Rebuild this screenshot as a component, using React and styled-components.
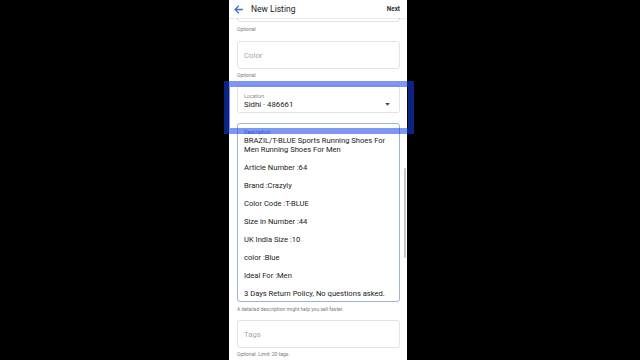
import React from 'react';
import styled, { createGlobalStyle } from 'styled-components';

const GlobalStyle = createGlobalStyle`
  html, body {
    margin: 0;
    padding: 0;
    background: #000;
    width: 640px;
    height: 360px;
    overflow: hidden;
    font-family: Roboto, "Liberation Sans", sans-serif;
  }
`;

// 스크롤된 상태를 흉내내기 위한 오프셋
const SCROLL_OFFSET = 24;

const descriptionLines = [
  ['BRAZIL/T-BLUE Sports Running Shoes For', 'Men Running Shoes For Men'],
  ['Article Number :64'],
  ['Brand :Crazyly'],
  ['Color Code :T-BLUE'],
  ['Size in Number :44'],
  ['UK India Size :10'],
  ['color :Blue'],
  ['Ideal For :Men'],
  ['3 Days Return Policy, No questions asked.'],
];

const BackArrow = () => (
  <svg width="9" height="9" viewBox="0 0 12 12" fill="none">
    <path d="M11 6H1.8M6 1.5L1.5 6L6 10.5" stroke="#2f6fe0" strokeWidth="1.7" strokeLinecap="square" />
  </svg>
);

const Caret = () => (
  <svg width="5" height="3" viewBox="0 0 6 4">
    <path d="M0 0H6L3 3.6Z" fill="#444" />
  </svg>
);

export default function App() {
  return (
    <Page>
      <GlobalStyle />
      <Phone>
        <Header>
          <BackButton><BackArrow /></BackButton>
          <Title>New Listing</Title>
          <NextButton>Next</NextButton>
        </Header>
        <Content>
          <Scroller offset={SCROLL_OFFSET}>
            <Field />
            <Hint gap={4}>Optional</Hint>

            <Field gap={8}>
              <Placeholder>Color</Placeholder>
            </Field>
            <Hint gap={3}>Optional</Hint>

            <Field gap={6} stacked>
              <FieldLabel>Location</FieldLabel>
              <ValueRow>
                <Value>Sidhi · 486661</Value>
                <Caret />
              </ValueRow>
            </Field>

            <DescriptionBox>
              <FieldLabel focused>Description</FieldLabel>
              <DescriptionText>
                {descriptionLines.map((lines, i) => (
                  <Paragraph key={i}>
                    {lines.map((line, j) => (
                      <React.Fragment key={j}>
                        {j > 0 && <br />}
                        {line}
                      </React.Fragment>
                    ))}
                  </Paragraph>
                ))}
              </DescriptionText>
            </DescriptionBox>
            <Hint gap={4}>A detailed description might help you sell faster.</Hint>

            <Field gap={7}>
              <Placeholder>Tags</Placeholder>
            </Field>
            <Hint gap={3}>Optional. Limit: 20 tags.</Hint>
          </Scroller>
          <ScrollThumb />
        </Content>
      </Phone>
      <Highlight />
    </Page>
  );
}

const Page = styled.div`
  position: relative;
  width: 640px;
  height: 360px;
  display: flex;
  padding-left: 229px;
  box-sizing: border-box;
`;

const Phone = styled.div`
  width: 178px;
  height: 360px;
  background: #fff;
  display: flex;
  flex-direction: column;
`;

const Header = styled.div`
  height: 18px;
  flex: 0 0 18px;
  display: flex;
  align-items: center;
  padding: 0 7px 0 4px;
  background: #fff;
  box-shadow: 0 1px 1px rgba(0, 0, 0, 0.08);
  position: relative;
  z-index: 2;
`;

const BackButton = styled.div`
  width: 10px;
  height: 10px;
  display: flex;
  align-items: center;
  justify-content: center;
`;

const Title = styled.div`
  margin-left: 8px;
  font-size: 8.5px;
  color: #222;
  flex: 1;
`;

const NextButton = styled.div`
  font-size: 6.3px;
  font-weight: 700;
  color: #333;
`;

const Content = styled.div`
  flex: 1;
  position: relative;
  overflow: hidden;
`;

const Scroller = styled.div`
  margin-top: ${(props) => -props.offset}px;
  padding: 0 7px 0 8px;
  display: flex;
  flex-direction: column;
`;

const Field = styled.div`
  height: 28px;
  box-sizing: border-box;
  margin-top: ${(props) => props.gap || 0}px;
  border: 1px solid #e2e2e2;
  border-radius: 3px;
  padding: ${(props) => (props.stacked ? '7px 9px 0 6px' : '0 9px 0 6px')};
  display: flex;
  flex-direction: ${(props) => (props.stacked ? 'column' : 'row')};
  justify-content: flex-start;
  align-items: ${(props) => (props.stacked ? 'stretch' : 'center')};
`;

const Placeholder = styled.span`
  font-size: 7.8px;
  color: #a8a8a8;
`;

const FieldLabel = styled.div`
  font-size: 5.2px;
  line-height: 6px;
  color: ${(props) => (props.focused ? '#3b6fd6' : '#8a8a8a')};
`;

const ValueRow = styled.div`
  display: flex;
  align-items: center;
  justify-content: space-between;
  margin-top: 1px;
`;

const Value = styled.span`
  font-size: 7.8px;
  line-height: 9px;
  color: #222;
`;

const DescriptionBox = styled.div`
  height: 179px;
  box-sizing: border-box;
  margin-top: 10px;
  border: 1px solid #9fb2cf;
  border-radius: 3px;
  padding: 5px 6px 0;
  overflow: hidden;
`;

const DescriptionText = styled.div`
  margin-top: 1px;
`;

const Paragraph = styled.p`
  margin: 0 0 9px;
  font-size: 7.6px;
  line-height: 9px;
  color: #222;
  white-space: nowrap;
`;

const Hint = styled.div`
  margin-top: ${(props) => props.gap}px;
  font-size: 5px;
  line-height: 7px;
  color: #7a7a7a;
`;

const ScrollThumb = styled.div`
  position: absolute;
  right: 1px;
  top: 150px;
  width: 2px;
  height: 90px;
  background: #c6c6c6;
  border-radius: 1px;
`;

const Highlight = styled.div`
  position: absolute;
  left: 224px;
  top: 81px;
  width: 190px;
  height: 53px;
  box-sizing: border-box;
  border: 6px solid rgba(22, 64, 233, 0.55);
  pointer-events: none;
`;
